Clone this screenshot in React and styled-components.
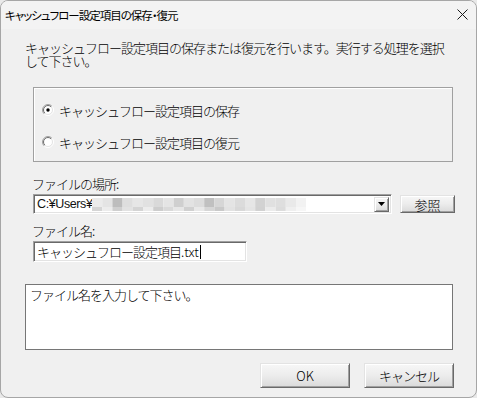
import React from 'react';
import styled, { createGlobalStyle } from 'styled-components';

const Global = createGlobalStyle`
  html, body { margin: 0; padding: 0; background: #e9e9e9; }
  body { font-family: "Noto Sans CJK JP", "Noto Sans", sans-serif; color: #000; font-weight: 300; }
  * { box-sizing: border-box; }
`;

const Window = styled.div`
  width: 477px;
  height: 398px;
  background: #f0f0f0;
  border: 1px solid #a6a6a6;
  border-radius: 8px;
  overflow: hidden;
  display: flex;
  flex-direction: column;
`;

const TitleBar = styled.div`
  height: 28px;
  flex: none;
  background: #f3f3f3;
  display: flex;
  align-items: center;
  justify-content: space-between;
  padding: 0 8px 0 4px;
`;

const TitleText = styled.span`
  font-size: 11.5px;
  line-height: 14px;
  font-weight: 400;
  font-feature-settings: "palt";
  letter-spacing: -1px;
`;

const CloseIcon = styled.svg`
  width: 11px;
  height: 11px;
  margin-top: -1px;
`;

const Body = styled.div`
  flex: 1;
  display: flex;
  flex-direction: column;
  padding: 0 0 0 24px;
  font-size: 13px;
  line-height: 13px;
  letter-spacing: -1px;
`;

const Description = styled.p`
  margin: 12px 0 0;
  width: 428px;
  line-height: 13px;
`;

const GroupBox = styled.div`
  margin: 20px 0 0 8px;
  width: 420px;
  height: 75px;
  border: 1px solid #a0a0a0;
  box-shadow: inset 1px 1px 0 #ffffff;
  display: flex;
  flex-direction: column;
  gap: 16px;
  padding: 14px 0 0 8px;
`;

const RadioRow = styled.label`
  height: 16px;
  display: flex;
  align-items: center;
  gap: 5px;
`;

const Label = styled.div`
  margin: ${p => p.$top}px 0 0 7px;
  height: 13px;
  line-height: 13px;
`;

const ComboRow = styled.div`
  margin: 4px 0 0 8px;
  display: flex;
  align-items: center;
  gap: 8px;
`;

const Sunken = styled.div`
  background: #ffffff;
  border: 1px solid;
  border-color: #a0a0a0 #ffffff #ffffff #a0a0a0;
  box-shadow: inset 1px 1px 0 #696969, inset -1px -1px 0 #e3e3e3;
  display: flex;
  align-items: center;
`;

const Combo = styled(Sunken)`
  width: 359px;
  height: 20px;
  padding: 0 2px 0 3px;
`;

const ComboText = styled.span`
  font-family: "Liberation Sans", sans-serif;
  font-weight: 400;
  color: #111;
  letter-spacing: -0.4px;
  font-size: 12.5px;
`;

const Latin = styled.span`
  letter-spacing: 0;
`;

const ComboSpacer = styled.div`
  flex: 1;
`;

const raised = `
  border: 1px solid;
  border-color: #e3e3e3 #696969 #696969 #e3e3e3;
  box-shadow: inset 1px 1px 0 #ffffff, inset -1px -1px 0 #a0a0a0;
  background: linear-gradient(#f7f7f7, #ececec 50%, #dadada);
  display: flex;
  align-items: center;
  justify-content: center;
  font-family: inherit;
  font-weight: inherit;
  color: #000;
  padding: 0;
`;

const DropButton = styled.div`
  ${raised}
  width: 15px;
  height: 15px;
`;

const Button = styled.button`
  ${raised}
  width: ${p => p.$w}px;
  height: ${p => p.$h}px;
  font-size: 13px;
  line-height: 13px;
  letter-spacing: ${p => p.$ls || '-1px'};
`;

const FileInput = styled(Sunken)`
  margin: 4px 0 0 8px;
  width: 214px;
  height: 21px;
  padding: 0 0 0 3px;
`;

const Caret = styled.span`
  display: inline-block;
  width: 1px;
  height: 14px;
  background: #000;
  margin-left: 1px;
`;

const MessageBox = styled.div`
  margin: 22px 0 0;
  width: 428px;
  height: 66px;
  background: #ffffff;
  border: 1px solid #767676;
  padding: 3px 0 0 4px;
`;

const ButtonRow = styled.div`
  margin: 13px 0 0;
  width: 429px;
  display: flex;
  justify-content: flex-end;
  gap: 14px;
`;

function Radio({ checked }) {
  return (
    <svg width="12" height="12" viewBox="0 0 12 12">
      <defs>
        <linearGradient id="ro" x1="0" y1="0" x2="1" y2="1">
          <stop offset="0.45" stopColor="#a0a0a0" />
          <stop offset="0.55" stopColor="#ffffff" />
        </linearGradient>
        <linearGradient id="ri" x1="0" y1="0" x2="1" y2="1">
          <stop offset="0.45" stopColor="#696969" />
          <stop offset="0.55" stopColor="#e3e3e3" />
        </linearGradient>
      </defs>
      <circle cx="6" cy="6" r="5.5" fill="none" stroke="url(#ro)" strokeWidth="1" />
      <circle cx="6" cy="6" r="4.5" fill="#ffffff" stroke="url(#ri)" strokeWidth="1" />
      {checked && <circle cx="6" cy="6" r="1.7" fill="#000" />}
    </svg>
  );
}

const topRow = ['#ebebeb','#e4e4e4','#bdbdbd','#dedede','#e6e6e6','#e1e1e1','#d9d9d9','#e4e4e4','#cfcfcf','#e2e2e2','#dcdcdc','#c0c0c0','#d6d6d6','#e4e4e4','#dbdbdb','#e6e6e6','#d2d2d2','#e0e0e0','#dedede','#e9e9e9','#f2f2f2'];
const botRow = ['#d5d5d5','#ececec','#cfcfcf','#e2e2e2','#d4d4d4','#ececec','#cdcdcd','#d9d9d9','#e6e6e6','#d0d0d0','#e8e8e8','#d6d6d6','#c9c9c9','#e2e2e2','#d8d8d8','#e4e4e4','#d1d1d1','#ebebeb','#dcdcdc','#efefef','#f6f6f6'];

function Mosaic() {
  return (
    <svg width="214" height="13" viewBox="0 0 214 13" style={{ display: 'block' }}>
      {topRow.map((c, i) => (
        <rect key={'t' + i} x={i * 10.2} y="0" width="10.2" height="9" fill={c} />
      ))}
      {botRow.map((c, i) => (
        <rect key={'b' + i} x={i * 10.2} y="9" width="10.2" height="4" fill={c} />
      ))}
    </svg>
  );
}

export default function App() {
  return (
    <>
      <Global />
      <Window>
        <TitleBar>
          <TitleText>キャッシュフロー設定項目の保存・復元</TitleText>
          <CloseIcon viewBox="0 0 11 11">
            <path d="M0.5 0.5 L10.5 10.5 M10.5 0.5 L0.5 10.5" stroke="#1a1a1a" strokeWidth="1" fill="none" />
          </CloseIcon>
        </TitleBar>
        <Body>
          <Description>
            キャッシュフロー設定項目の保存または復元を行います。実行する処理を選択して下さい。
          </Description>
          <GroupBox>
            <RadioRow>
              <Radio checked />
              <span>キャッシュフロー設定項目の保存</span>
            </RadioRow>
            <RadioRow>
              <Radio />
              <span>キャッシュフロー設定項目の復元</span>
            </RadioRow>
          </GroupBox>
          <Label $top={15}>ファイルの場所:</Label>
          <ComboRow>
            <Combo>
              <ComboText>C:¥Users¥</ComboText>
              <Mosaic />
              <ComboSpacer />
              <DropButton>
                <svg width="7" height="4" viewBox="0 0 7 4">
                  <path d="M0 0 H7 L3.5 4 Z" fill="#000" />
                </svg>
              </DropButton>
            </Combo>
            <Button $w={55} $h={18} $ls="0px">参照</Button>
          </ComboRow>
          <Label $top={10}>ファイル名:</Label>
          <FileInput>
            <span>キャッシュフロー設定項目<Latin>.txt</Latin></span>
            <Caret />
          </FileInput>
          <MessageBox>ファイル名を入力して下さい。</MessageBox>
          <ButtonRow>
            <Button $w={90} $h={25} $ls="0px">OK</Button>
            <Button $w={90} $h={25}>キャンセル</Button>
          </ButtonRow>
        </Body>
      </Window>
    </>
  );
}
